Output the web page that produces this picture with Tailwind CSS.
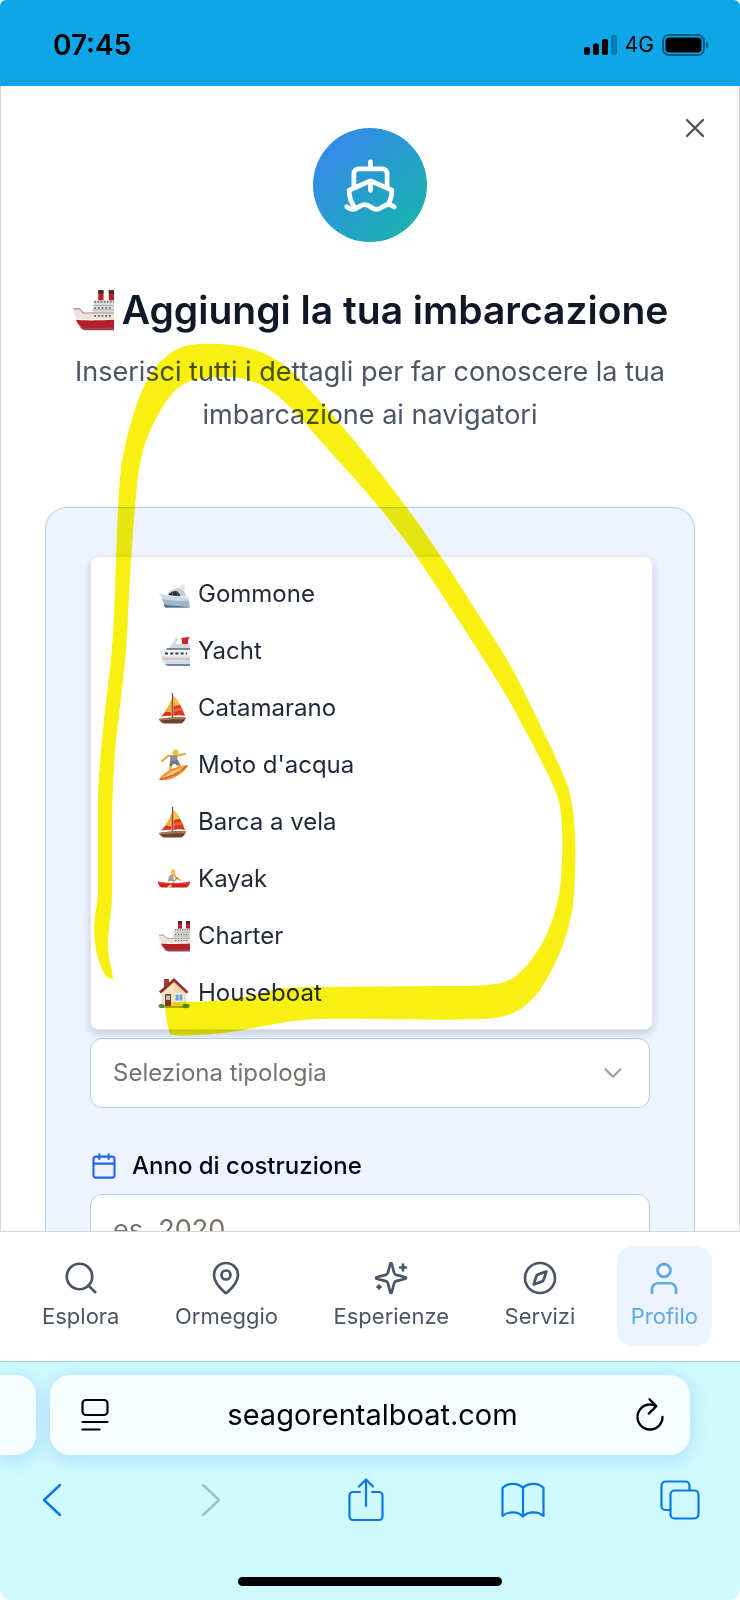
<!DOCTYPE html>
<html lang="it">
<head>
<meta charset="utf-8">
<meta name="viewport" content="width=device-width, initial-scale=1">
<title>Seago – Aggiungi la tua imbarcazione</title>
<script src="https://cdn.jsdelivr.net/npm/@tailwindcss/browser@4"></script>
</head>
<body class="bg-white font-['Inter','Noto_Sans',sans-serif]">

<!-- Emoji artwork shared by the title and the list -->
<svg class="hidden" aria-hidden="true">
  <symbol id="ship" viewBox="0 0 32 32">
    <path d="M20 1h4v10h-4zM28 1h4v10h-4z" fill="#b3202a"/>
    <path d="M20 1h4v2.500h-4zM28 1h4v2.500h-4z" fill="#3c2a30"/>
    <path d="M17 8.500h15V22H15.500V14H17z" fill="#dcdcda"/>
    <path d="M17 9.800h15" stroke="#6c6c70" stroke-width="1.200" stroke-dasharray="1.200 1.200"/>
    <path d="M16 12.500h16M16 16h16" stroke="#b0b0b0" stroke-width=".8"/>
    <path d="M1 15l4-.5L8 18h24v5H4C2 20.500 1 18 1 15z" fill="#e9e3dc"/>
    <path d="M1 15.200l4.500-.2 3 3.300H32" stroke="#b98e8a" stroke-width=".9" fill="none"/>
    <path d="M17 14.500h14M17 20.500h14" stroke="#5b5b60" stroke-width="1.200" stroke-dasharray="1.300 1.500"/>
    <path d="M3 23.500c5 .6 18 .5 29 0V30H9c-3-1-5-3.500-6-6.500z" fill="#b71f27"/>
    <path d="M5.500 28.500C7 30.500 9 31.500 11 31.500h21v-2H9z" fill="#8d4a54"/>
  </symbol>
  <symbol id="motorboat" viewBox="0 0 32 32">
    <path d="M17 11c4-1 8-3 9-7l1 6-1 4z" fill="#e3e4e4"/>
    <path d="M9 17c2-4 6-6.500 11-6.500 4 0 7 2 8 7.500l1 3H8z" fill="#c9ced0"/>
    <path d="M9.500 18c2-3.500 5-5 9-5 2 1 3.500 3 4 6l-12 1z" fill="#24323a"/>
    <path d="M15 13.500L14 19M19 13l1 6" stroke="#6d7f87" stroke-width=".7"/>
    <path d="M1 15c6 2 13 3.500 20 3.500 4 0 7-1 9 0l2 11H7C5 24 4 20 1 15z" fill="#c8dae5"/>
    <path d="M4 21c6 1.500 17 2.500 26.500 1.500l1.500 7H7C6 26.500 5.500 23.500 4 21z" fill="#9db7c8"/>
    <path d="M1 15c6 2.500 15 4 29 4" stroke="#eef3f5" stroke-width="1.200" fill="none"/>
    <path d="M7 29.500l-1-3c7 2 17 1 26 3z" fill="#4a6c84"/>
  </symbol>
  <symbol id="yacht" viewBox="0 0 32 32">
    <path d="M13 11l5-9 2 1-3 8z" fill="#d9dcde"/>
    <path d="M23 3l9-1-2 3v4h-6V5z" fill="#d81e2c"/>
    <path d="M14 9h18v4H11z" fill="#d6dade"/>
    <path d="M9 13h23v2H8z" fill="#7b868c"/>
    <path d="M1 16h31v6H4z" fill="#eceff0"/>
    <path d="M7 18.500h22" stroke="#364149" stroke-width="2" stroke-dasharray="3 2.200"/>
    <path d="M3 21.500h29v9H9c-3-2-5-5-6-9z" fill="#d3dde3"/>
    <path d="M4 24h28" stroke="#e3aaae" stroke-width="1"/>
    <path d="M6.500 29h25.500v2H10z" fill="#6d8ba0"/>
  </symbol>
  <symbol id="sailboat" viewBox="0 0 32 32">
    <path d="M14.500 1v26" stroke="#7a5130" stroke-width="1.300"/>
    <path d="M13.500 7C12 13 8 20 3 24.500c4-1 7-1 10.500-.5z" fill="#dc2f22"/>
    <path d="M13.300 8C11.500 13 9.500 16 7 19.500l6.300 1z" fill="#f6b12e"/>
    <path d="M15.500 4c5 5 9 12 11.500 20-4-1-7.500-1-11.500 0z" fill="#dc3524"/>
    <path d="M15.500 4c2.500 2.500 5 5 6.500 9-2.500 0-4 1-6.500 1z" fill="#f9c43a"/>
    <path d="M15.500 17.500c3-1 5.500-1.500 8.500-1l1 2.500c-3.500-.5-6 0-9.500 1z" fill="#ee6a2e"/>
    <path d="M1 27c8-1.500 18-2 27-1.500-1 3-3 5.500-5 6H6c-2-.5-4-2-5-4.500z" fill="#6a4330"/>
    <path d="M1 27c8-1.500 18-2 27-1.500l-1 1.800c-8-.2-17 .2-25 1.200z" fill="#a87b53"/>
  </symbol>
  <symbol id="surfer" viewBox="0 0 32 32">
    <path d="M1 31c2-6 15-14 29-15-3 8-17 17-29 15z" fill="#f08b35"/>
    <path d="M4 29c6-5 13-9 22-11.500C21 23 12 28 4 29z" fill="#ffc27c"/>
    <path d="M2 30.500C12 28 22 24 29 17" stroke="#d96524" stroke-width="1.200" fill="none"/>
    <path d="M4 12l6-5 7 0 10-2" stroke="#e8a92e" stroke-width="2" stroke-linecap="round" stroke-linejoin="round" fill="none"/>
    <path d="M13 15l-1 7M19 15l4 3-1 4" stroke="#e8a92e" stroke-width="2.400" stroke-linecap="round" stroke-linejoin="round" fill="none"/>
    <path d="M12 6.500l7-.5 1 8-7.500 2z" fill="#8d8c9c"/>
    <path d="M12 12l8-1 2 4.500-3 1-3-2.500-2 3h-2.500z" fill="#77768a"/>
    <circle cx="17.500" cy="3.500" r="3" fill="#f4bd3a"/>
  </symbol>
  <symbol id="kayak" viewBox="0 0 32 32">
    <path d="M11 18l2-5 3-2 2 4 4 2" stroke="#e8ab3a" stroke-width="1.800" stroke-linecap="round" stroke-linejoin="round" fill="none"/>
    <path d="M11 13l4-2 1 7h-6z" fill="#a5a0aa"/>
    <circle cx="15" cy="8.500" r="2.200" fill="#f2bb43"/>
    <path d="M0 18.500c5 1.200 9 1.500 16 1.500s12-.3 16-1.500c0 2.500-1.500 5.500-4 6H4c-2.500-.5-4-3.500-4-6z" fill="#cf1f22"/>
    <path d="M0 18.500c5 1.200 9 1.500 16 1.500s12-.3 16-1.500l-1 2.300H1z" fill="#e8483e"/>
    <path d="M20 14l-8 9" stroke="#8c5530" stroke-width="1"/>
    <ellipse cx="11.500" cy="23.500" rx="2.800" ry="1.300" transform="rotate(-35 11.500 23.500)" fill="#f0c9a0"/>
  </symbol>
  <symbol id="house" viewBox="0 0 32 32">
    <path d="M6 2h5v8H6z" fill="#a4402e"/>
    <path d="M4 14L16 3l12 12v15H4z" fill="#f3d8a8"/>
    <path d="M4 14L16 4v26H4z" fill="#f7e3bd"/>
    <path d="M1 14.500L16 1l14.500 14-2 1.500L16 5 3 16.500z" fill="#8e2f2c"/>
    <path d="M7 17h6v13H7z" fill="#7b3b26"/>
    <path d="M8 18.500h4v4.500H8z" fill="#a9c6d6"/>
    <path d="M16.500 16.500h9v8h-9z" fill="#fff"/>
    <path d="M17.500 17.500h7v6h-7z" fill="#5fa3d8"/>
    <path d="M21 17.500v6" stroke="#fff" stroke-width=".8"/>
    <path d="M4 29h24v2H4z" fill="#c0a67c"/>
    <ellipse cx="3.500" cy="29" rx="3" ry="2" fill="#4f8f2f"/>
    <ellipse cx="28" cy="29" rx="3.500" ry="2.200" fill="#4f8f2f"/>
  </symbol>
</svg>

<div class="relative flex h-screen flex-col overflow-hidden rounded-t-md rounded-b-xl">

  <!-- Status bar -->
  <header class="flex h-[86px] shrink-0 items-center justify-between bg-[#0ea5e9] pt-1 pr-[31px] pl-[53px] text-black">
    <time class="text-[28px] font-semibold">07:45</time>
    <div class="flex items-center gap-2">
      <svg class="h-5 w-[33px]" viewBox="0 0 33 20" aria-hidden="true">
        <rect y="12" width="6" height="8" rx="2"/><rect x="9" y="8.500" width="6" height="11.500" rx="2"/><rect x="18" y="4" width="6" height="16" rx="2"/><rect x="27" width="6" height="20" rx="2" opacity=".25"/>
      </svg>
      <span class="text-[21px]">4G</span>
      <svg class="h-[22px] w-[47px]" viewBox="0 0 47 22" aria-hidden="true">
        <rect x="1" y="1" width="41" height="20" rx="6" fill="none" stroke="#000" stroke-opacity=".45" stroke-width="2"/>
        <rect x="3.500" y="3.500" width="36" height="15" rx="4"/>
        <path d="M44 7.500c3 1 3 6 0 7z" opacity=".45"/>
      </svg>
    </div>
  </header>

  <!-- Dialog -->
  <main role="dialog" aria-labelledby="title" class="relative min-h-0 flex-1 overflow-hidden border-x border-neutral-300 px-11 pt-[42px]">
    <button type="button" aria-label="Chiudi" class="absolute top-[26px] right-7 text-neutral-600">
      <svg class="size-8" viewBox="0 0 24 24" fill="none" stroke="currentColor" stroke-width="1.800" stroke-linecap="round"><path d="M18 6 6 18M6 6l12 12"/></svg>
    </button>

    <div class="mx-auto flex size-[114px] items-center justify-center rounded-full bg-[linear-gradient(135deg,#3b82f6,#14b8a6)]">
      <svg class="size-[57px] text-white" viewBox="0 0 24 24" fill="none" stroke="currentColor" stroke-width="2" stroke-linecap="round" stroke-linejoin="round" aria-hidden="true"><path d="M12 10.189V14M12 2v3M19 13V7a2 2 0 0 0-2-2H7a2 2 0 0 0-2 2v6"/><path d="M19.380 20A11.600 11.600 0 0 0 21 14l-8.188-3.639a2 2 0 0 0-1.624 0L3 14a11.600 11.600 0 0 0 2.810 7.760"/><path d="M2 21c.6.5 1.200 1 2.500 1 2.500 0 2.500-2 5-2 1.300 0 1.900.5 2.500 1s1.200 1 2.500 1c2.500 0 2.500-2 5-2 1.300 0 1.900.5 2.500 1"/></svg>
    </div>

    <h1 id="title" class="mt-11 flex items-center justify-center gap-2 text-[39px] leading-[48px] font-semibold whitespace-nowrap text-gray-900">
      <svg class="size-[42px] shrink-0" role="img" aria-label="Nave"><use href="#ship"/></svg>
      Aggiungi la tua imbarcazione
    </h1>
    <p class="mx-auto mt-4 max-w-[620px] text-center text-[27px] leading-[43px] text-gray-600">Inserisci tutti i dettagli per far conoscere la tua imbarcazione ai navigatori</p>

    <form class="mt-[71px] rounded-t-[22px] border border-b-0 border-[#b0d2ee] bg-[#edf4ff] px-11 pt-12">
      <ul role="listbox" aria-label="Tipologia" class="relative -mr-[3px] rounded-lg border border-gray-200 bg-white p-2 text-[24px] text-gray-800 shadow-[0_4px_8px_rgba(0,0,0,0.16)]">
        <li role="option" class="flex h-[57px] items-center gap-2 pl-[59px]"><svg class="size-8" aria-hidden="true"><use href="#motorboat"/></svg>Gommone</li>
        <li role="option" class="flex h-[57px] items-center gap-2 pl-[59px]"><svg class="size-8" aria-hidden="true"><use href="#yacht"/></svg>Yacht</li>
        <li role="option" class="flex h-[57px] items-center gap-2 pl-[59px]"><svg class="size-8" aria-hidden="true"><use href="#sailboat"/></svg>Catamarano</li>
        <li role="option" class="flex h-[57px] items-center gap-2 pl-[59px]"><svg class="size-8" aria-hidden="true"><use href="#surfer"/></svg>Moto d'acqua</li>
        <li role="option" class="flex h-[57px] items-center gap-2 pl-[59px]"><svg class="size-8" aria-hidden="true"><use href="#sailboat"/></svg>Barca a vela</li>
        <li role="option" class="flex h-[57px] items-center gap-2 pl-[59px]"><svg class="size-8" aria-hidden="true"><use href="#kayak"/></svg>Kayak</li>
        <li role="option" class="flex h-[57px] items-center gap-2 pl-[59px]"><svg class="size-8" aria-hidden="true"><use href="#ship"/></svg>Charter</li>
        <li role="option" class="flex h-[57px] items-center gap-2 pl-[59px]"><svg class="size-8" aria-hidden="true"><use href="#house"/></svg>Houseboat</li>
      </ul>

      <div class="mt-2 grid items-center">
        <select aria-label="Tipologia imbarcazione" class="col-start-1 row-start-1 h-[70px] w-full appearance-none rounded-xl border border-[#b0d2ee] bg-white px-[22px] text-[24px] text-stone-500">
          <option>Seleziona tipologia</option>
        </select>
        <svg class="pointer-events-none col-start-1 row-start-1 mr-[22px] size-[30px] justify-self-end text-neutral-400" viewBox="0 0 24 24" fill="none" stroke="currentColor" stroke-width="1.800" stroke-linecap="round" stroke-linejoin="round" aria-hidden="true"><path d="m6 9 6 6 6-6"/></svg>
      </div>

      <label for="year" class="mt-[42px] flex items-center gap-3.5 text-[24px] leading-8 font-medium text-gray-950">
        <svg class="size-7 text-[#2563eb]" viewBox="0 0 24 24" fill="none" stroke="currentColor" stroke-width="1.800" stroke-linecap="round" stroke-linejoin="round" aria-hidden="true"><path d="M8 2v4M16 2v4M3 10h18"/><rect x="3" y="4" width="18" height="18" rx="2"/></svg>
        Anno di costruzione
      </label>
      <input id="year" type="text" placeholder="es. 2020" class="mt-3 h-[70px] w-full rounded-xl border border-[#b0d2ee] bg-white px-[22px] text-[27px] text-gray-900 placeholder:text-stone-500">
    </form>
  </main>

  <!-- App navigation -->
  <nav class="flex h-[130px] shrink-0 items-start justify-between border-t border-neutral-300 bg-white px-7 pt-3.5 text-[22px] leading-7 text-gray-600">
    <a href="#" class="flex flex-col items-center gap-1.5 rounded-2xl px-3.5 pt-3.5 pb-4">
      <svg class="size-9" viewBox="0 0 24 24" fill="none" stroke="currentColor" stroke-width="1.800" stroke-linecap="round" stroke-linejoin="round" aria-hidden="true"><circle cx="11" cy="11" r="8.500"/><path d="m21.500 21.500-4.500-4.500"/></svg>Esplora</a>
    <a href="#" class="flex flex-col items-center gap-1.5 rounded-2xl px-3.5 pt-3.5 pb-4">
      <svg class="size-9" viewBox="0 0 24 24" fill="none" stroke="currentColor" stroke-width="1.800" stroke-linecap="round" stroke-linejoin="round" aria-hidden="true"><path d="M20 10c0 4.993-5.539 10.193-7.399 11.799a1 1 0 0 1-1.202 0C9.539 20.193 4 14.993 4 10a8 8 0 0 1 16 0"/><circle cx="12" cy="10" r="3"/></svg>Ormeggio</a>
    <a href="#" class="flex flex-col items-center gap-1.5 rounded-2xl px-3.5 pt-3.5 pb-4">
      <svg class="size-9" viewBox="0 0 24 24" fill="none" stroke="currentColor" stroke-width="1.800" stroke-linecap="round" stroke-linejoin="round" aria-hidden="true"><path d="M9.937 15.500A2 2 0 0 0 8.500 14.063l-6.135-1.582a.5.5 0 0 1 0-.962L8.500 9.936A2 2 0 0 0 9.937 8.500l1.582-6.135a.5.5 0 0 1 .963 0L14.063 8.500A2 2 0 0 0 15.500 9.937l6.135 1.581a.5.5 0 0 1 0 .964L15.500 14.063a2 2 0 0 0-1.437 1.437l-1.582 6.135a.5.5 0 0 1-.963 0zM20 3v4M22 5h-4M4 17v2M5 18H3"/></svg>Esperienze</a>
    <a href="#" class="flex flex-col items-center gap-1.5 rounded-2xl px-3.5 pt-3.5 pb-4">
      <svg class="size-9" viewBox="0 0 24 24" fill="none" stroke="currentColor" stroke-width="1.800" stroke-linecap="round" stroke-linejoin="round" aria-hidden="true"><path d="m16.240 7.760-1.804 5.411a2 2 0 0 1-1.265 1.265L7.760 16.240l1.804-5.411a2 2 0 0 1 1.265-1.265z"/><circle cx="12" cy="12" r="10"/></svg>Servizi</a>
    <a href="#" aria-current="page" class="flex flex-col items-center gap-1.5 rounded-2xl bg-[#edf4ff] px-3.5 pt-3.5 pb-4 text-[#5fa9e2]">
      <svg class="size-9" viewBox="0 0 24 24" fill="none" stroke="currentColor" stroke-width="1.800" stroke-linecap="round" stroke-linejoin="round" aria-hidden="true"><path d="M20 22v-2.500a4 4 0 0 0-4-4H8a4 4 0 0 0-4 4V22"/><circle cx="12" cy="7" r="4.300"/></svg>Profilo</a>
  </nav>

  <!-- Browser chrome -->
  <footer class="shrink-0 border-t border-[#9fcfdb] bg-[#cffafe] pt-[13px] pb-3.5">
    <div class="flex gap-3.5">
      <div class="h-20 w-9 shrink-0 rounded-r-[20px] bg-[#f5fdff] shadow-[0_4px_20px_rgba(147,197,253,0.6)]"></div>
      <div class="mr-[50px] flex h-20 flex-1 items-center justify-between rounded-[20px] bg-[#f5fdff] pr-5 pl-[25px] text-black shadow-[0_4px_20px_rgba(147,197,253,0.6)]">
        <button type="button" aria-label="Menu pagina" class="flex size-10 items-center justify-center">
          <svg class="h-[34px] w-7" viewBox="0 0 28 34" fill="none" stroke="currentColor" stroke-width="2.200" stroke-linecap="round"><rect x="1.500" y="2" width="25" height="15" rx="3.500"/><path d="M1.500 24h25M1.500 31.500h17"/></svg>
        </button>
        <a href="#" class="text-[29px]">seagorentalboat.com</a>
        <button type="button" aria-label="Ricarica" class="flex size-10 items-center justify-center">
          <svg class="h-[34px] w-7" viewBox="0 0 28 34" fill="none" stroke="currentColor" stroke-width="2.300" stroke-linecap="round" stroke-linejoin="round"><path d="M26.500 19A12.500 12.500 0 1 1 14 6.500c2 0 4 .5 6 1.600M13.500 1.200l6.800 6.900-7.500 7.500"/></svg>
        </button>
      </div>
    </div>
    <div class="mt-[21px] flex items-center justify-between pr-9 pl-7 text-[#0b78e8]">
      <button type="button" aria-label="Indietro" class="flex size-12 items-center justify-center"><svg class="h-9 w-5" viewBox="0 0 20 36" fill="none" stroke="currentColor" stroke-width="2.500" stroke-linecap="round" stroke-linejoin="round"><path d="M18 3 2 18l16 15"/></svg></button>
      <button type="button" aria-label="Avanti" class="flex size-12 items-center justify-center pl-1 text-[#a3bfc9]"><svg class="h-9 w-5" viewBox="0 0 20 36" fill="none" stroke="currentColor" stroke-width="2.500" stroke-linecap="round" stroke-linejoin="round"><path d="m2 3 16 15L2 33"/></svg></button>
      <button type="button" aria-label="Condividi" class="flex size-12 items-center justify-center"><svg class="h-11 w-9" viewBox="0 0 36 44" fill="none" stroke="currentColor" stroke-width="2.200" stroke-linecap="round" stroke-linejoin="round"><path d="M12 14H5a3.500 3.500 0 0 0-3.500 3.500v21A3.500 3.500 0 0 0 5 42h26a3.500 3.500 0 0 0 3.500-3.500v-21A3.500 3.500 0 0 0 31 14h-7M18 28V2M11 8.500 18 1.500l7 7"/></svg></button>
      <button type="button" aria-label="Preferiti" class="flex size-12 items-center justify-center"><svg class="h-9 w-11" viewBox="0 0 44 36" fill="none" stroke="currentColor" stroke-width="2.200" stroke-linejoin="round"><path d="M22 6C17 .5 6 .5 1.500 6v28C7 29 17 29 22 34.500 27 29 37 29 42.500 34V6C38 .5 27 .5 22 6zM22 6v28"/></svg></button>
      <button type="button" aria-label="Schede" class="flex size-12 items-center justify-center"><svg class="size-10" viewBox="0 0 40 40" fill="none" stroke="currentColor" stroke-width="2.200"><rect x="10.500" y="10.500" width="28" height="28" rx="4"/><path d="M10.500 30H5.500a4 4 0 0 1-4-4V5.500a4 4 0 0 1 4-4h20a4 4 0 0 1 4 4v5"/></svg></button>
    </div>
    <div class="mx-auto mt-[53px] h-[9px] w-[264px] rounded-full bg-black"></div>
  </footer>

  <!-- Highlighter stroke drawn over the list -->
  <svg class="pointer-events-none absolute inset-x-0 top-0 w-full mix-blend-multiply" viewBox="0 0 740 1600" aria-hidden="true">
    <path fill="#f7f010" d="M113 979C103 980 97 958 95 943C92 920 98 905 98 893V800C99 765 103 725 110 670C115 625 115 580 117 530C119 490 120 465 125 447C135 405 150 345 200 344C250 342 280 355 305 385C340 422 380 470 423 530C445 562 462 588 480 617C500 647 515 672 528 700C540 725 562 768 569 790C577 820 576 860 574 895C572 925 560 960 540 990C525 1008 515 1018 480 1019C430 1021 360 1018 313 1019C270 1022 240 1034 197 1035C185 1036 175 1036 170 1034C167 1025 165 1012 165 1002C200 1003 230 1001 267 992C285 987 300 987 320 987L440 986C475 986 500 987 515 977C540 957 557 920 561 880C563 850 564 815 557 795C550 775 524 728 509 700C494 675 478 650 463 627C447 602 431 578 417 557C398 529 365 489 335 457C300 420 275 377 228 377C190 377 180 382 165 403C147 432 141 450 137 485C133 525 131 563 128 613C127 650 124 672 120 707C115 745 112 785 112 827V893C112 915 108 925 108 947C108 958 112 967 113 979Z"/>
  </svg>
</div>
</body>
</html>
